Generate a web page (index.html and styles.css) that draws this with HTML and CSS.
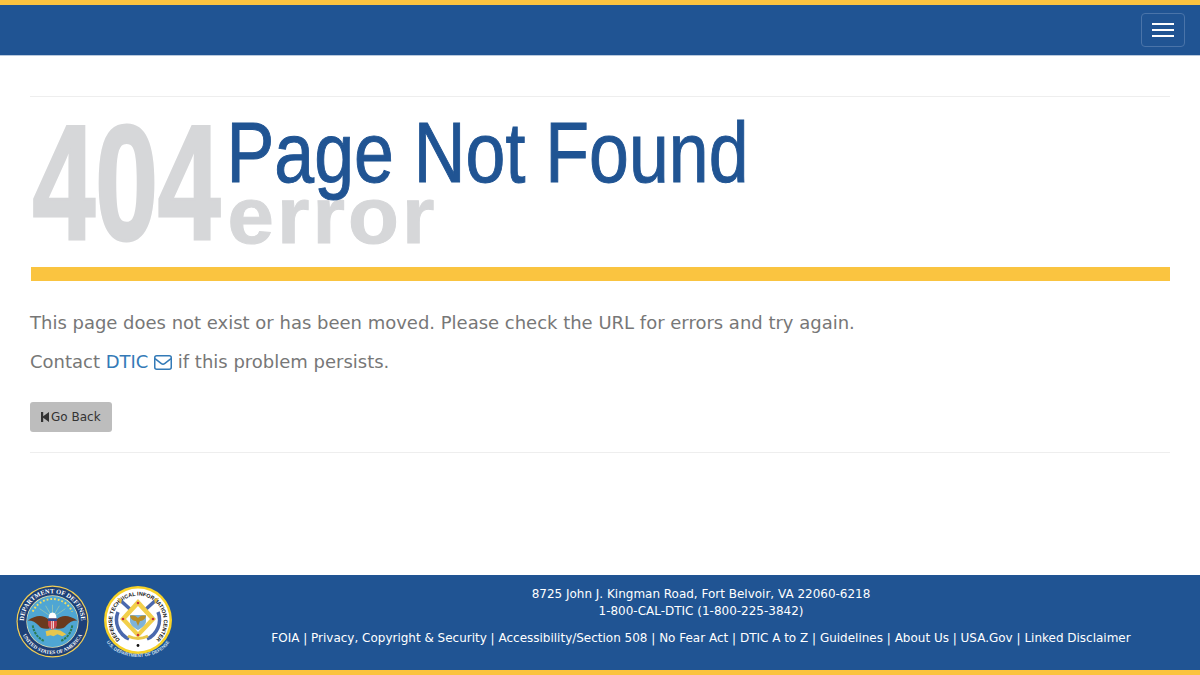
FILE: index.html
```html
<!DOCTYPE html>
<html lang="en">
<head>
    <meta charset="UTF-8">
    <meta name="viewport" content="width=device-width, initial-scale=1.0">
    <title>404 Page Not Found</title>
    <link rel="stylesheet" href="styles.css">
</head>
<body>
    <header class="navbar">
        <button class="nav-toggle" type="button" aria-label="Toggle navigation">
            <span class="icon-bar"></span>
            <span class="icon-bar"></span>
            <span class="icon-bar"></span>
        </button>
    </header>

    <main class="content">
        <hr class="rule">
        <svg class="banner" viewBox="0 0 1140 170" role="img" aria-label="404 error Page Not Found">
            <text class="banner-404" x="2.500" y="142" textLength="188" lengthAdjust="spacingAndGlyphs">404</text>
            <text class="banner-error" x="197.500" y="145.500" textLength="210" lengthAdjust="spacingAndGlyphs">error</text>
            <text class="banner-title" x="196.500" y="84.500" textLength="522" lengthAdjust="spacingAndGlyphs">Page Not Found</text>
        </svg>
        <div class="banner-bar"></div>

        <p class="message">This page does not exist or has been moved. Please check the URL for errors and try again.</p>
        <p class="message">Contact <a href="#">DTIC
            <svg class="icon-mail" viewBox="0 0 18 15"><rect x="0.75" y="0.75" width="16.5" height="13.5" rx="2" /><path d="M1 3.6 L7.4 8.6 Q9 9.8 10.6 8.6 L17 3.6" /></svg></a> if this problem persists.</p>

        <a class="btn-back" href="#">
            <svg class="icon-back" viewBox="0 0 8 10"><path d="M0 0h2.2v4.2L8 0v10L2.2 5.8V10H0z" /></svg>
            Go Back
        </a>
        <hr class="rule rule-end">
    </main>

    <footer class="footer">
        <div class="seals">
            <svg class="seal seal-dod" viewBox="0 0 74 74">
                <defs>
                    <path id="dod-top" d="M10 48A29 29 0 1 1 64 48" />
                    <path id="dod-bottom" d="M4 37a33 33 0 0 0 66 0" />
                </defs>
                <circle cx="37" cy="37" r="36.500" fill="#f3cf55" />
                <circle cx="37" cy="37" r="35.300" fill="#1d3f77" />
                <circle cx="37" cy="37" r="26.500" fill="#e9e3b0" />
                <circle cx="37" cy="37" r="25.800" fill="#4fa6d3" />
                <text class="seal-text" font-size="6.600"><textPath href="#dod-top" startOffset="50%" text-anchor="middle">DEPARTMENT OF DEFENSE</textPath></text>
                <text class="seal-text" font-size="5.200"><textPath href="#dod-bottom" startOffset="50%" text-anchor="middle">UNITED STATES OF AMERICA</textPath></text>
                <path class="seal-stars" d="M17 27A22 22 0 0 1 57 27" />
                <path d="M37 33L24 24M37 33L30 21M37 33V20M37 33L44 21M37 33L50 24" stroke="#dfe58f" stroke-width="0.600" opacity="0.700" />
                <path d="M12 36c8-6 16-6 21-1l1 9c-5 1-9 0-11-3-3-3-6-5-11-5z" fill="#6a3a1e" />
                <path d="M62 36c-8-6-16-6-21-1l-1 9c5 1 9 0 11-3 3-3 6-5 11-5z" fill="#6a3a1e" />
                <path d="M33 34c0-3 1-6 4-6s4 3 4 6z" fill="#fff" />
                <path d="M32.500 34h9v6c0 3-2.500 4.500-4.500 5.500-2-1-4.500-2.500-4.500-5.500z" fill="#c8424c" />
                <path d="M32.500 34h9v2.500h-9z" fill="#2b4a8f" />
                <path d="M35.800 36.500h.9v8h-.9zM37.600 36.500h.9v7.500h-.9z" fill="#f2e9e9" />
                <path d="M30 47l7-2 8 1 6 4-4 2-5-2-4 2-3-1-4 1z" fill="#e6c64e" />
                <path class="seal-wreath" d="M17 41c1 7 5 13 12 16M57 41c-1 7-5 13-12 16" />
            </svg>
            <svg class="seal seal-dtic" viewBox="0 0 70 76">
                <defs>
                    <path id="dtic-ring" d="M20.500 57.500A25.700 25.700 0 1 1 49.500 57.500" />
                    <path id="dtic-under" d="M2 54C12 78 58 78 68 54" />
                </defs>
                <circle cx="35" cy="35" r="34" fill="#f7d227" />
                <circle cx="35" cy="35" r="31.500" fill="#fff" />
                <text class="seal-text-dark" font-size="5.400"><textPath href="#dtic-ring" startOffset="50%" text-anchor="middle">DEFENSE TECHNICAL INFORMATION CENTER</textPath></text>
                <circle cx="35" cy="60.500" r="1.400" fill="#111" />
                <path class="seal-arc" d="M15 27A21 21 0 0 0 26 54M55 27A21 21 0 0 1 44 54" />
                <path d="M17 15L28 25M53 15L42 25" stroke="#4a68ad" stroke-width="3.500" />
                <path d="M14 13l5 1-1 5zM56 13l-5 1 1 5z" fill="#e0b840" />
                <path class="seal-arc-gold" d="M25 51Q35 56 45 51" />
                <path d="M35 14L53 34 35 53 17 34z" fill="#f2cf4a" />
                <path d="M35 21L47 34 35 47 23 34z" fill="#fff" />
                <path d="M27 30h16v6c0 4-4 7-8 9-4-2-8-5-8-9z" fill="#7fb3d8" />
                <path d="M27 31c4-1 6 0 8 2 2-2 4-3 8-2-1 4-4 5-6 5l-2 5-2-5c-2 0-5-1-6-5z" fill="#b98d26" />
                <circle cx="35" cy="18" r="1.300" fill="#c8323c" />
                <circle cx="20" cy="34" r="1.300" fill="#c8323c" />
                <circle cx="50" cy="34" r="1.300" fill="#c8323c" />
                <circle cx="35" cy="50" r="1.300" fill="#c8323c" />
                <text class="seal-text-under" font-size="4.600"><textPath href="#dtic-under" startOffset="50%" text-anchor="middle">U.S. DEPARTMENT OF DEFENSE</textPath></text>
            </svg>
        </div>
        <div class="footer-info">
            <div class="address">8725 John J. Kingman Road, Fort Belvoir, VA 22060-6218</div>
            <div class="address">1-800-CAL-DTIC (1-800-225-3842)</div>
            <nav class="footer-links">
                <a href="#">FOIA</a> | <a href="#">Privacy, Copyright &amp; Security</a> | <a href="#">Accessibility/Section 508</a> | <a href="#">No Fear Act</a> | <a href="#">DTIC A to Z</a> | <a href="#">Guidelines</a> | <a href="#">About Us</a> | <a href="#">USA.Gov</a> | <a href="#">Linked Disclaimer</a>
            </nav>
        </div>
    </footer>
</body>
</html>
```

FILE: styles.css
```css
* {
    box-sizing: border-box;
}

html, body {
    height: 100%;
}

body {
    display: flex;
    flex-direction: column;
    margin: 0;
    background: #fff;
    color: #777;
    font-family: "DejaVu Sans", sans-serif;
    overflow: hidden;
}

/* Top bar */
.navbar {
    display: flex;
    justify-content: flex-end;
    align-items: flex-start;
    height: 56px;
    padding: 8px 15px 0;
    background: #205493;
    border-top: 5px solid #fbc340;
    border-bottom: 1px solid #b9c9dd;
}

.nav-toggle {
    display: flex;
    flex-direction: column;
    gap: 4px;
    width: 44px;
    height: 34px;
    padding: 9px 10px;
    background: transparent;
    border: 1px solid #4a74a9;
    border-radius: 4px;
}

.icon-bar {
    display: block;
    width: 22px;
    height: 2px;
    background: #fff;
}

/* Main content */
.content {
    flex: 1;
    padding: 40px 30px 0;
}

.rule {
    height: 1px;
    margin: 0;
    background: #eee;
    border: 0;
}

.rule-end {
    margin-top: 20px;
}

.banner {
    display: block;
    width: 1140px;
    height: 170px;
    font-family: "Liberation Sans", Arial, sans-serif;
}

.banner-404 {
    fill: #d6d7d9;
    stroke: #d6d7d9;
    stroke-width: 3px;
    font-size: 164px;
    font-weight: 700;
}

.banner-title {
    fill: #205493;
    stroke: #205493;
    stroke-width: 1px;
    font-size: 85px;
}

.banner-error {
    fill: #d6d7d9;
    stroke: #d6d7d9;
    stroke-width: 1px;
    font-size: 80px;
    font-weight: 700;
    letter-spacing: 3px;
}

.banner-bar {
    height: 14px;
    margin-left: 1px;
    background: #fac440;
}

.message {
    margin: 0 0 13px;
    font-size: 17.990px;
    line-height: 26px;
}

.banner-bar + .message {
    margin-top: 29px;
}

.message a {
    color: #337ab7;
    text-decoration: none;
}

.icon-mail {
    width: 18px;
    height: 15px;
    vertical-align: -2px;
    fill: none;
    stroke: #337ab7;
    stroke-width: 1.500;
}

.btn-back {
    display: inline-flex;
    align-items: center;
    gap: 2px;
    height: 30px;
    margin-top: 14px;
    padding: 0 11px;
    color: #333;
    background: #bdbdbd;
    border-radius: 3px;
    font-size: 12px;
    text-decoration: none;
    vertical-align: top;
}

.icon-back {
    width: 8px;
    height: 10px;
    fill: #333;
}

/* Footer */
.footer {
    display: flex;
    height: 100px;
    background: #205493;
    border-bottom: 5px solid #fbc340;
    color: #fff;
}

.seals {
    display: flex;
    align-items: flex-start;
    gap: 14px;
    width: 202px;
    padding: 10px 0 0 16px;
}

.seal-dod {
    width: 73px;
    height: 73px;
}

.seal-dtic {
    width: 70px;
    height: 76px;
}

.seal-text {
    fill: #fff;
    font-family: "Liberation Serif", serif;
    font-weight: 700;
}

.seal-stars {
    fill: none;
    stroke: #f0dc62;
    stroke-width: 2px;
    stroke-dasharray: 1.800 2;
}

.seal-wreath {
    fill: none;
    stroke: #2c7c55;
    stroke-width: 2px;
    stroke-dasharray: 2.500 1;
}

.seal-arc {
    fill: none;
    stroke: #4a68ad;
    stroke-width: 3.500px;
}

.seal-arc-gold {
    fill: none;
    stroke: #e9c84a;
    stroke-width: 3px;
}

.seal-text-dark {
    fill: #111;
    font-family: "Liberation Sans", sans-serif;
    font-weight: 700;
}

.seal-text-under {
    fill: #cfe0f2;
    font-family: "Liberation Sans", sans-serif;
    font-weight: 700;
}

.footer-info {
    flex: 1;
    padding-top: 11px;
    font-size: 11.990px;
    line-height: 17px;
    text-align: center;
}

.footer-links {
    margin-top: 10px;
}

.footer-links a {
    color: #fff;
    text-decoration: none;
}
```
